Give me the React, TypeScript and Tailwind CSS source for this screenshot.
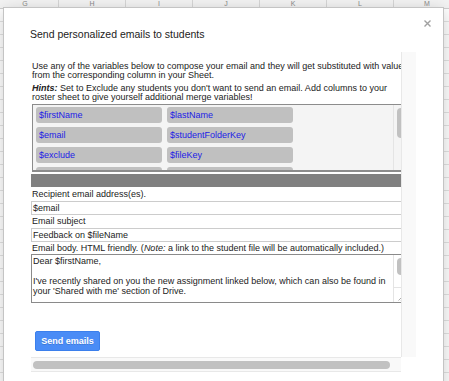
import React from 'react';

const columns = ['G', 'H', 'I', 'J', 'K', 'L', 'M'];

const variables = [
  '$firstName',
  '$lastName',
  '$email',
  '$studentFolderKey',
  '$exclude',
  '$fileKey',
  '$fileName',
  '$fileUrl',
];

function SheetBackground() {
  return (
    <div className="absolute inset-0">
      {/* column header row */}
      <div className="flex h-[9px] ml-[-8px] bg-[#f3f3f3] border-b border-[#cfcfcf]">
        {columns.map((c) => (
          <div
            key={c}
            className="w-[67px] shrink-0 border-r border-[#d6d6d6] text-center text-[7px] leading-[7px] text-[#8a8a8a]"
          >
            {c}
          </div>
        ))}
      </div>
      {/* grid cells */}
      <div className="flex flex-col ml-[-8px]">
        {Array.from({ length: 29 }).map((_, r) => (
          <div key={r} className="flex h-[13px]">
            {columns.map((c) => (
              <div key={c} className="w-[67px] shrink-0 border-r border-b border-[#e3e3e3]" />
            ))}
          </div>
        ))}
      </div>
    </div>
  );
}

export default function App() {
  return (
    <div className="relative w-[449px] h-[381px] overflow-hidden bg-white font-['Liberation_Sans',Arial,sans-serif] text-[#222]">
      <SheetBackground />

      {/* Dialog */}
      <div className="absolute left-[3px] top-[7px] w-[441px] h-[390px] bg-white border border-[#c4c4c4] shadow-[0_4px_16px_rgba(0,0,0,0.2)]">
        <button className="absolute right-[12px] top-[12px] w-[7px] h-[7px]">
          <svg viewBox="0 0 7 7" className="w-[7px] h-[7px]">
            <path d="M0.5 0.5 L6.5 6.5 M6.5 0.5 L0.5 6.5" stroke="#a0a0a0" strokeWidth="1.4" />
          </svg>
        </button>

        <h1 className="mt-[20px] ml-[26px] text-[10.5px] leading-[12px] font-normal text-[#222]">
          Send personalized emails to students
        </h1>

        {/* iframe content with scrollbars */}
        <div className="mt-[12px] ml-[27px] grid grid-cols-[370px_15px] grid-rows-[305px_15px]">
          <div className="overflow-hidden pt-[10px] text-[9px]">
            <div className="ml-[1px] leading-[9.4px] whitespace-nowrap">
              <div>Use any of the variables below to compose your email and they will get substituted with values</div>
              <div>from the corresponding column in your Sheet.</div>
              <div className="mt-[3px]">
                <b className="italic">Hints:</b> Set to Exclude any students you don't want to send an email. Add columns to your
              </div>
              <div>roster sheet to give yourself additional merge variables!</div>
            </div>

            {/* variables box */}
            <div className="mt-[1.5px] ml-[1px] w-[377px] h-[68px] flex border border-b-2 border-[#8c8c8c] bg-[#f4f4f4] overflow-hidden">
              <div className="w-[360px] pl-[3px] pt-[2px]">
                <div className="grid grid-cols-[126px_126px] gap-x-[5px] gap-y-[4px]">
                  {variables.map((v) => (
                    <div
                      key={v}
                      className="h-[16px] rounded-[3px] bg-[#c0c0c0] pl-[3px] text-[9px] leading-[16px] text-[#1c1ce6]"
                    >
                      {v}
                    </div>
                  ))}
                </div>
              </div>
              <div className="w-[15px] border-l border-[#e4e4e4] pt-[3px] pl-[3px]">
                <div className="w-[8px] h-[30px] rounded-full bg-[#c1c1c1]" />
              </div>
            </div>

            <div className="mt-[2px] w-[380px] h-[13px] bg-[#808080]" />

            <div className="ml-[1px] h-[14px] leading-[14px] whitespace-nowrap">Recipient email address(es).</div>
            <div className="w-[380px] h-[14px] border border-[#cccccc] pl-[1px] leading-[12px]">$email</div>
            <div className="ml-[1px] h-[13px] leading-[13px]">Email subject</div>
            <div className="w-[380px] h-[14px] border border-[#cccccc] pl-[1px] leading-[12px]">Feedback on $fileName</div>
            <div className="ml-[1px] h-[12px] leading-[12px] whitespace-nowrap">
              Email body. HTML friendly. (<i>Note:</i> a link to the student file will be automatically included.)
            </div>

            {/* textarea */}
            <div className="w-[378px] h-[49px] flex border border-[#8a8a8a] bg-white">
              <div className="w-[361px] pl-[1px] pt-[1px] leading-[10px] whitespace-nowrap">
                <div>Dear $firstName,</div>
                <div className="h-[10px]" />
                <div>I've recently shared on you the new assignment linked below, which can also be found in</div>
                <div>your 'Shared with me' section of Drive.</div>
              </div>
              <div className="w-[15px] flex flex-col border-l border-[#e4e4e4]">
                <div className="h-[33px] border-b border-[#e4e4e4] pt-[3px] pl-[3px]">
                  <div className="w-[8px] h-[17px] rounded-full bg-[#c1c1c1]" />
                </div>
                <div className="flex-1 flex items-end justify-start pl-[4px] pb-[1px]">
                  <svg viewBox="0 0 6 6" className="w-[6px] h-[6px]">
                    <path d="M0.5 5.5 L5.5 0.5 M3 5.5 L5.5 3" stroke="#999" strokeWidth="0.8" />
                  </svg>
                </div>
              </div>
            </div>

            <button className="mt-[28px] ml-[4px] w-[65px] h-[20px] rounded-[2px] bg-[#4a8cf6] border border-[#3b7fec] text-white text-[9px] font-bold leading-[18px] [text-shadow:0_1px_0_rgba(0,0,0,0.15)]">
              Send emails
            </button>
          </div>

          {/* vertical scrollbar track */}
          <div className="bg-[#f9f9f9] border-l border-[#e8e8e8]" />

          {/* horizontal scrollbar */}
          <div className="bg-[#f9f9f9] border-t border-b border-[#e8e8e8] pt-[3px] pl-[2px]">
            <div className="w-[357px] h-[8px] rounded-full bg-[#c1c1c1]" />
          </div>
          <div className="bg-white" />
        </div>
      </div>
    </div>
  );
}
